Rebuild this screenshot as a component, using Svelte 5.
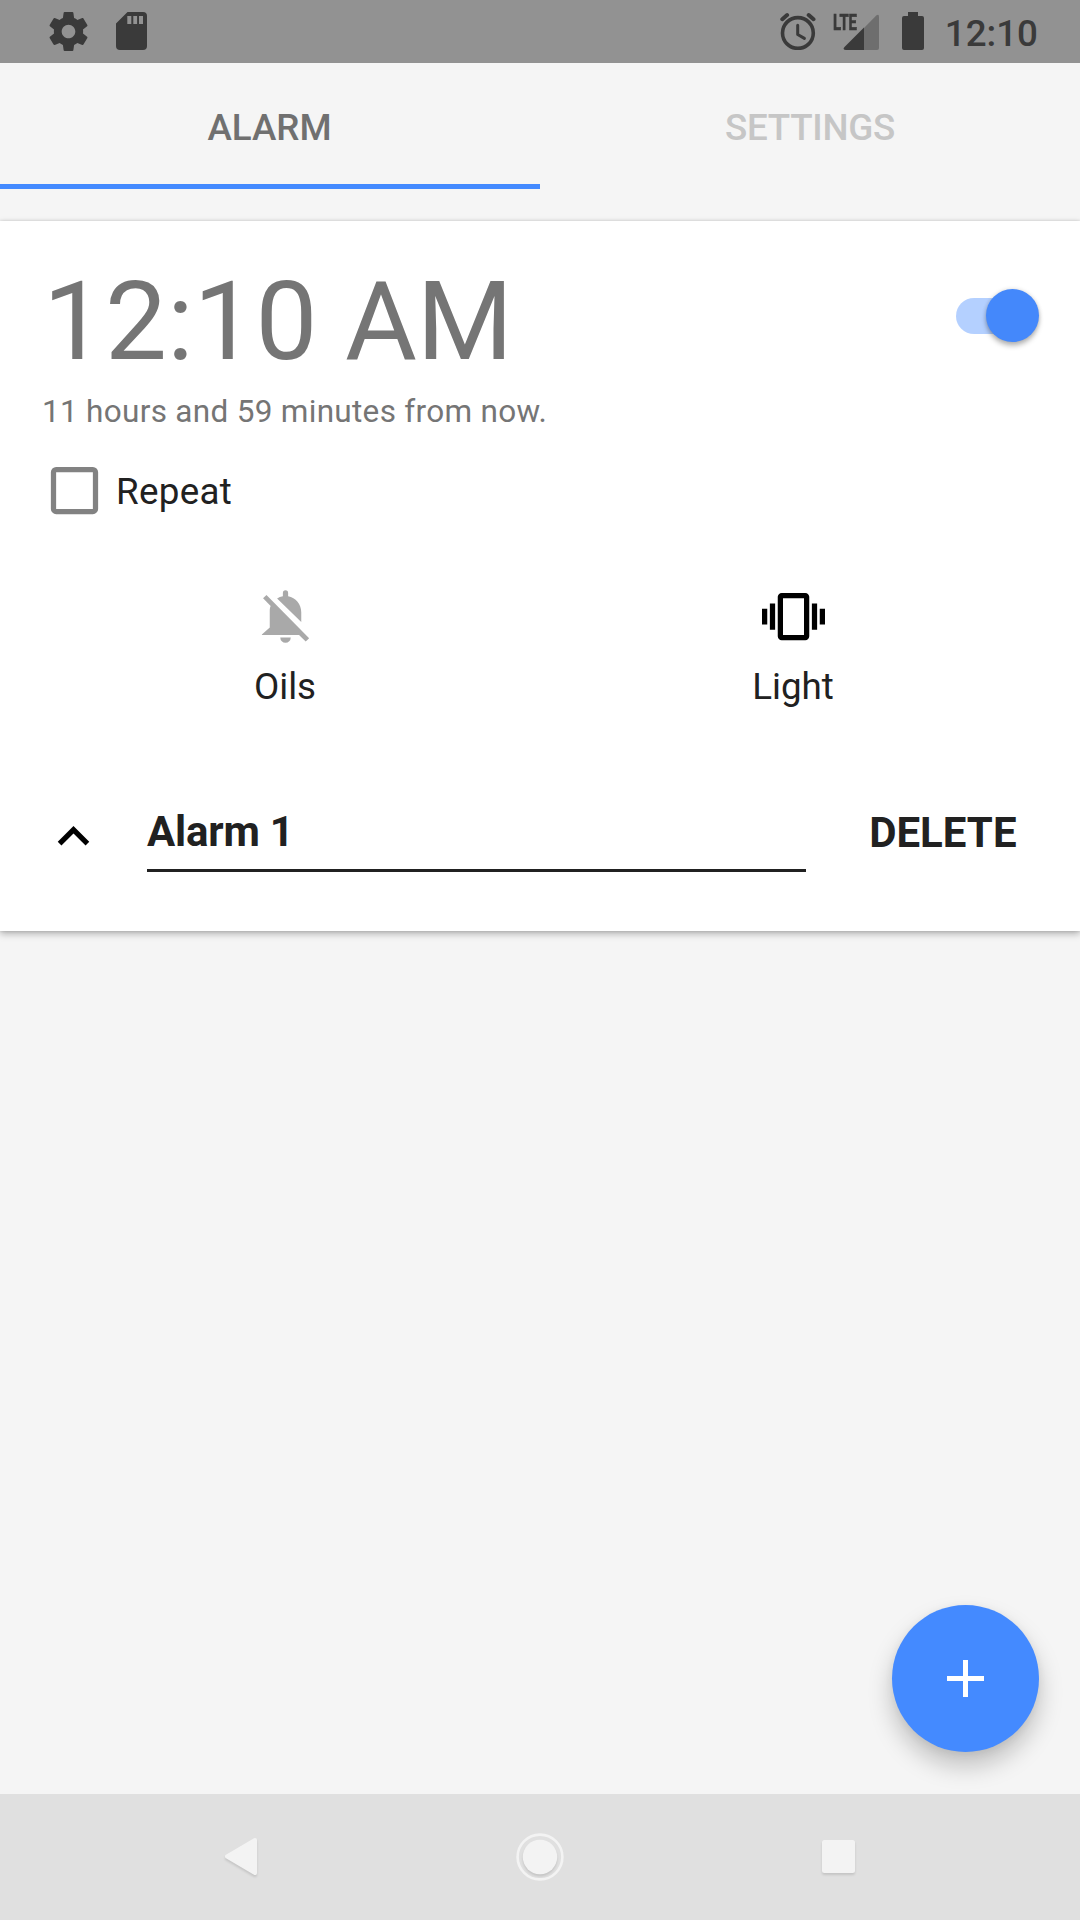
<script lang="ts">
  let enabled = $state(true);
  let repeat = $state(false);
  let name = $state('Alarm 1');
</script>

<div class="screen">
  <header class="status">
    <div class="status-left">
      <svg class="gear" viewBox="2 2 20 20"><path fill-rule="evenodd" d="M19.43 12.98c.04-.32.07-.64.07-.98s-.03-.66-.07-.98l2.11-1.65c.19-.15.24-.42.12-.64l-2-3.46c-.12-.22-.39-.3-.61-.22l-2.49 1c-.52-.4-1.08-.73-1.69-.98l-.38-2.65C14.46 2.18 14.25 2 14 2h-4c-.25 0-.46.18-.49.42l-.38 2.65c-.61.25-1.17.59-1.69.98l-2.49-1c-.23-.09-.49 0-.61.22l-2 3.46c-.13.22-.07.49.12.64l2.11 1.65c-.04.32-.07.65-.07.98s.03.66.07.98l-2.11 1.65c-.19.15-.24.42-.12.64l2 3.46c.12.22.39.3.61.22l2.49-1c.52.4 1.08.73 1.69.98l.38 2.65c.03.24.24.42.49.42h4c.25 0 .46-.18.49-.42l.38-2.65c.61-.25 1.17-.59 1.69-.98l2.49 1c.23.09.49 0 .61-.22l2-3.46c.12-.22.07-.49-.12-.64l-2.11-1.65zM12 15.5c-1.93 0-3.5-1.57-3.5-3.5s1.57-3.5 3.5-3.5 3.5 1.57 3.5 3.5-1.57 3.5-3.5 3.5z" /></svg>
      <svg class="sd" viewBox="0 0 31 38"><path fill-rule="evenodd" d="M11.5 0H27a4 4 0 0 1 4 4v30a4 4 0 0 1-4 4H4a4 4 0 0 1-4-4V11.5zM11.3 4v8h4V4zm6 0v8h3.8V4zm5.7 0v8h4V4z" /></svg>
    </div>
    <div class="status-right">
      <svg class="clock" viewBox="0 0 37 38">
        <g fill="none" stroke="currentColor" stroke-linecap="round" stroke-linejoin="round">
          <circle cx="17.900" cy="21" r="15.400" stroke-width="3.600" />
          <path stroke-width="3" d="M17.700 13.300v9.200l6.700 3.900" />
          <path stroke-width="4" d="M2.300 7.200 7.100 3.100M28.700 3.100l4.800 4.100" />
        </g>
      </svg>
      <div class="signal">
        <span class="lte">LTE</span>
        <svg viewBox="0 0 47 38">
          <path opacity=".4" d="M31 16 43.500 3.300Q46 1.500 46 5v31q0 2-2 2H31z" />
          <path d="M31 15.600V38H13q-4-.4-1.500-3z" />
        </svg>
      </div>
      <svg class="battery" viewBox="0 0 22 38"><path d="M6 0h10v4h4a2 2 0 0 1 2 2v30a2 2 0 0 1-2 2H2a2 2 0 0 1-2-2V6a2 2 0 0 1 2-2h4z" /></svg>
      <span class="now">12:10</span>
    </div>
  </header>

  <nav class="tabs">
    <div class="tab active"><span>ALARM</span></div>
    <div class="tab"><span>SETTINGS</span></div>
  </nav>

  <main>
    <section class="card">
      <div class="top">
        <div>
          <div class="time">12:10 AM</div>
          <div class="remaining">11 hours and 59 minutes from now.</div>
        </div>
        <button class="switch" class:on={enabled} aria-label="Alarm enabled" onclick={() => (enabled = !enabled)}><i></i></button>
      </div>

      <button class="repeat" onclick={() => (repeat = !repeat)}>
        <svg viewBox="0 0 24 24">
          <rect x="4" y="4" width="16" height="16" rx="1" fill="none" stroke="currentColor" stroke-width="2" />
          {#if repeat}<path d="M10 17l-5-5 1.400-1.400L10 14.200 17.600 6.600 19 8z" />{/if}
        </svg>
        <span>Repeat</span>
      </button>

      <div class="modes">
        <div class="mode oils">
          <svg viewBox="0 0 24 24"><path d="M8.800 5.100c.65-.4 1.400-.7 2.200-.85V3a1 1 0 0 1 2 0v1.250c2.900.5 5 3 5 6.100V14.100zM4.750 3.800 21 20.300 19.700 21.550 17.150 19H3v-.1l3-2.700V10c0-.9.100-1.500.35-2L3.450 5.050zM10 20h4a2 2 0 0 1-4 0z" /></svg>
          <span>Oils</span>
        </div>
        <div class="mode">
          <svg viewBox="0 0 24 24"><path fill-rule="evenodd" d="M0 15h2V9H0v6zm3 2h2V7H3v10zm19-8v6h2V9h-2zm-3 8h2V7h-2v10zM16.5 3h-9C6.670 3 6 3.670 6 4.500v15c0 .83.67 1.500 1.500 1.500h9c.83 0 1.500-.67 1.500-1.500v-15c0-.83-.67-1.500-1.500-1.500zM16 19H8V5h8v14z" /></svg>
          <span>Light</span>
        </div>
      </div>

      <div class="bottom">
        <svg class="chevron" viewBox="0 0 24 24"><path d="M12 8l-6 6 1.410 1.410L12 10.830l4.590 4.580L18 14z" /></svg>
        <div class="name">{name}</div>
        <div class="delete">DELETE</div>
      </div>
    </section>

    <button class="fab" aria-label="Add alarm">
      <svg viewBox="0 0 37 37"><path d="M16 0h5v16h16v5H21v16h-5V21H0v-5h16z" /></svg>
    </button>
  </main>

  <footer class="navbar">
    <svg class="back" viewBox="0 0 32 37"><path d="M30 2 2 18.500 30 35z" stroke="currentColor" stroke-width="4" stroke-linejoin="round" /></svg>
    <svg class="home" viewBox="0 0 48 48"><circle cx="24" cy="24" r="22.400" fill="none" stroke="currentColor" stroke-width="2.600" /><circle class="dot" cx="24" cy="24" r="17.200" /></svg>
    <svg class="recent" viewBox="0 0 33 33"><rect width="33" height="33" rx="2.500" /></svg>
  </footer>
</div>

<style>
  :global(body) { margin: 0; }
  .screen {
    width: 1080px;
    height: 1920px;
    display: flex;
    flex-direction: column;
    overflow: hidden;
    background: #f5f5f5;
    color: #212121;
    font: 400 36.75px/44px Roboto, sans-serif;
  }
  svg { display: block; fill: currentColor; flex: none; }
  button { border: 0; padding: 0; background: none; color: inherit; font: inherit; text-align: left; }

  .status {
    height: 63px;
    box-sizing: border-box;
    flex: none;
    display: flex;
    justify-content: space-between;
    padding: 12px 42px 0 49px;
    background: #929292;
    color: #3a3a3a;
  }
  .status-left, .status-right { display: flex; align-items: flex-start; }
  .gear { width: 39px; height: 39px; }
  .sd { width: 31px; height: 38px; margin-left: 28px; }
  .clock { width: 37px; height: 38px; margin-right: 16px; }
  .signal { display: grid; width: 47px; height: 38px; margin-right: 22px; }
  .signal > * { grid-area: 1 / 1; }
  .signal svg { width: 47px; height: 38px; }
  .lte {
    font-size: 22.5px;
    font-weight: 700;
    line-height: 20px;
    justify-self: start;
    transform: scaleX(.66);
    transform-origin: left;
    -webkit-text-stroke: .7px currentColor;
  }
  .battery { width: 22px; height: 38px; }
  .now { margin-left: 21px; font-weight: 500; line-height: 43px; }

  .tabs { height: 158px; flex: none; display: flex; align-items: flex-start; font-weight: 500; letter-spacing: -.25px; }
  .tab {
    width: 50%;
    height: 126px;
    box-sizing: border-box;
    padding-top: 43px;
    line-height: 43px;
    text-align: center;
    color: #c6c6c6;
  }
  .active { padding-right: 1px; letter-spacing: 0; color: #707070; border-bottom: 5px solid #448aff; }

  main { flex: 1; min-height: 0; display: flex; flex-direction: column; justify-content: space-between; }
  .card {
    height: 710px;
    box-sizing: border-box;
    padding-top: 36px;
    background: #fff;
    box-shadow: 0 3px 7px rgba(0, 0, 0, .27), 0 0 3px rgba(0, 0, 0, .15);
  }
  .top { display: flex; justify-content: space-between; height: 201.7px; padding: 0 41px 0 42px; color: #757575; }
  .time { margin-left: 1px; font-size: 110.25px; line-height: 130px; }
  .remaining { margin-top: 6px; font-size: 31.5px; line-height: 38px; letter-spacing: .3px; }
  .switch {
    width: 83px;
    height: 36px;
    margin-top: 40.5px;
    border-radius: 18px;
    background: #bdbdbd;
    display: flex;
    align-items: center;
  }
  .switch.on { background: linear-gradient(90deg, #b4d0ff 65px, transparent 65px); justify-content: flex-end; }
  .switch i { width: 53px; height: 53px; flex: none; border-radius: 50%; background: #4488fb; box-shadow: 0 4px 5px rgba(0, 0, 0, .25), 0 0 4px rgba(0, 0, 0, .15); }

  .repeat { display: flex; align-items: center; height: 63px; margin-left: 42.6px; }
  .repeat svg { width: 63px; height: 63px; color: #828282; }
  .repeat span { margin-left: 10.4px; padding-top: 3px; letter-spacing: .3px; }

  .modes { display: flex; margin-top: 63.3px; padding: 0 33px 0 31px; justify-content: space-between; }
  .mode { width: 508px; display: flex; flex-direction: column; align-items: center; }
  .mode svg { width: 63px; height: 63px; margin-bottom: 17px; color: #000; }
  .oils svg { color: #a9a9a9; }

  .bottom { display: flex; align-items: flex-start; margin-top: 96px; padding: 0 63.5px 0 42px; font-size: 42px; font-weight: 700; line-height: 48px; }
  .chevron { width: 63px; height: 63px; color: #000; }
  .name { width: 659px; height: 67px; margin-left: 42px; padding-top: 3px; box-sizing: border-box; border-bottom: 3px solid #212121; letter-spacing: -.2px; }
  .delete { margin-left: auto; padding-top: 4px; }

  .fab {
    align-self: flex-end;
    width: 147px;
    height: 147px;
    margin: 0 41px 42px 0;
    border-radius: 50%;
    display: flex;
    align-items: center;
    justify-content: center;
    background: #448aff;
    color: #fff;
    box-shadow: 0 14px 24px rgba(0, 0, 0, .22), 0 2px 8px rgba(0, 0, 0, .06);
  }
  .fab svg { width: 37px; height: 37px; }

  .navbar {
    height: 126px;
    box-sizing: border-box;
    flex: none;
    z-index: 1;
    display: flex;
    align-items: center;
    justify-content: space-between;
    padding: 0 225px 1px 225px;
    background: #e0e0e0;
    color: #f3f3f3;
  }
  .back { width: 32px; height: 37px; filter: drop-shadow(0 2px 1px rgba(0, 0, 0, .12)); }
  .home { width: 48px; height: 48px; }
  .dot { filter: drop-shadow(0 2px 1px rgba(0, 0, 0, .12)); }
  .recent { width: 33px; height: 33px; filter: drop-shadow(0 2px 1px rgba(0, 0, 0, .12)); }
</style>
